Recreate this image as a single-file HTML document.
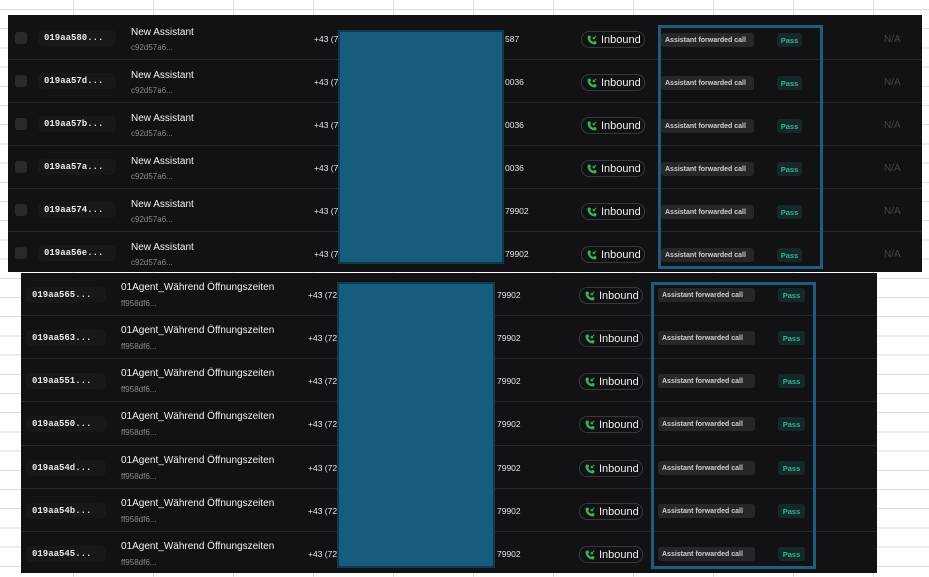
<!DOCTYPE html>
<html><head><meta charset="utf-8"><style>
*{margin:0;padding:0;box-sizing:border-box}
body{width:929px;height:577px;overflow:hidden;position:relative;background:#fff;
background-image:repeating-linear-gradient(90deg,transparent 0 72px,#dcdcdc 72px 73px,transparent 73px 80px),repeating-linear-gradient(180deg,transparent 0 9px,#dcdcdc 9px 10px,transparent 10px 19.2px);
background-position:1px 0,0 0;font-family:"Liberation Sans",sans-serif}
.p{position:absolute;background:#121214}
.r{position:absolute;left:0;right:0;border-bottom:1px solid #2a2a2d}
.r:last-child{border-bottom:none}
.a{position:absolute;white-space:nowrap}
.cb{width:12px;height:12px;border-radius:3px;background:#2a2a2e}
.id{height:16px;border-radius:5px;background:#18181a;color:#e8e8e8;font:bold 9px "Liberation Mono",monospace;line-height:16px;padding-left:6px}
.nm{color:#f2f2f2;font-size:10px}
.sb{color:#8a8a8a;font-size:8px}
.ph{color:#e6e6e6;font-size:8.5px}
.ib{height:17px;width:64px;border:1px solid #38383c;border-radius:8px;color:#f0f0f0;font-size:11px;display:flex;align-items:center;padding-left:19px}
.ib svg{position:absolute;left:5px;top:3px}
.fw{height:14px;width:93px;overflow:hidden;border-radius:3px;background:#27272a;color:#cfcfcf;font-size:7px;font-weight:bold;display:flex;align-items:center;padding:0 4px}
.ps{height:14px;border-radius:3px;background:#15292a;color:#39b38c;font-size:7.5px;font-weight:bold;display:flex;align-items:center;justify-content:center}
.na{color:#444;font-size:10px}
.blue{position:absolute;background:#165c7c;border:2px solid #0d3a52}
.box{position:absolute;border:3px solid #1b5e80}
</style></head><body>
<svg width="0" height="0" style="position:absolute"><defs><symbol id="ph" viewBox="0 0 10 10"><path d="M2 0.5 L3.6 0.8 L4 3 L3 3.8 Q4 6 6.2 7 L7 6 L9.3 6.4 L9.5 8.2 Q9 9.6 7.5 9.5 Q1 8.5 0.5 2.3 Q0.6 0.7 2 0.5Z" fill="#3fae5f"/><path d="M9.2 0.8 L6.2 3.8 M6.2 1.8 V3.8 H8.2" stroke="#3fae5f" stroke-width="1" fill="none"/></symbol></defs></svg>

<div class="p" style="left:8px;top:15px;width:914px;height:257px">
<div class="r" style="top:0;height:45px"><div class="a cb" style="left:7px;top:17px"></div><div class="a id" style="left:30px;top:15px;width:78px">019aa580...</div><div class="a nm" style="left:123px;top:12px">New Assistant</div><div class="a sb" style="left:123px;top:28px">c92d57a6...</div><div class="a ph" style="left:306px;top:19px">+43 (7</div><div class="a ph" style="left:497px;top:19px">587</div><div class="a ib" style="left:573px;top:16px"><svg width="10" height="10"><use href="#ph"/></svg>Inbound</div><div class="a fw" style="left:653px;top:18px">Assistant forwarded call</div><div class="a ps" style="left:769px;top:18px;width:25px">Pass</div><div class="a na" style="left:876px;top:19px">N/A</div></div>
<div class="r" style="top:45px;height:43px"><div class="a cb" style="left:7px;top:15px"></div><div class="a id" style="left:30px;top:13px;width:78px">019aa57d...</div><div class="a nm" style="left:123px;top:10px">New Assistant</div><div class="a sb" style="left:123px;top:26px">c92d57a6...</div><div class="a ph" style="left:306px;top:17px">+43 (7</div><div class="a ph" style="left:497px;top:17px">0036</div><div class="a ib" style="left:573px;top:14px"><svg width="10" height="10"><use href="#ph"/></svg>Inbound</div><div class="a fw" style="left:653px;top:16px">Assistant forwarded call</div><div class="a ps" style="left:769px;top:16px;width:25px">Pass</div><div class="a na" style="left:876px;top:17px">N/A</div></div>
<div class="r" style="top:88px;height:43px"><div class="a cb" style="left:7px;top:15px"></div><div class="a id" style="left:30px;top:13px;width:78px">019aa57b...</div><div class="a nm" style="left:123px;top:10px">New Assistant</div><div class="a sb" style="left:123px;top:26px">c92d57a6...</div><div class="a ph" style="left:306px;top:17px">+43 (7</div><div class="a ph" style="left:497px;top:17px">0036</div><div class="a ib" style="left:573px;top:14px"><svg width="10" height="10"><use href="#ph"/></svg>Inbound</div><div class="a fw" style="left:653px;top:16px">Assistant forwarded call</div><div class="a ps" style="left:769px;top:16px;width:25px">Pass</div><div class="a na" style="left:876px;top:17px">N/A</div></div>
<div class="r" style="top:131px;height:43px"><div class="a cb" style="left:7px;top:15px"></div><div class="a id" style="left:30px;top:13px;width:78px">019aa57a...</div><div class="a nm" style="left:123px;top:10px">New Assistant</div><div class="a sb" style="left:123px;top:26px">c92d57a6...</div><div class="a ph" style="left:306px;top:17px">+43 (7</div><div class="a ph" style="left:497px;top:17px">0036</div><div class="a ib" style="left:573px;top:14px"><svg width="10" height="10"><use href="#ph"/></svg>Inbound</div><div class="a fw" style="left:653px;top:16px">Assistant forwarded call</div><div class="a ps" style="left:769px;top:16px;width:25px">Pass</div><div class="a na" style="left:876px;top:17px">N/A</div></div>
<div class="r" style="top:174px;height:43px"><div class="a cb" style="left:7px;top:15px"></div><div class="a id" style="left:30px;top:13px;width:78px">019aa574...</div><div class="a nm" style="left:123px;top:10px">New Assistant</div><div class="a sb" style="left:123px;top:26px">c92d57a6...</div><div class="a ph" style="left:306px;top:17px">+43 (7</div><div class="a ph" style="left:497px;top:17px">79902</div><div class="a ib" style="left:573px;top:14px"><svg width="10" height="10"><use href="#ph"/></svg>Inbound</div><div class="a fw" style="left:653px;top:16px">Assistant forwarded call</div><div class="a ps" style="left:769px;top:16px;width:25px">Pass</div><div class="a na" style="left:876px;top:17px">N/A</div></div>
<div class="r" style="top:217px;height:40px"><div class="a cb" style="left:7px;top:15px"></div><div class="a id" style="left:30px;top:13px;width:78px">019aa56e...</div><div class="a nm" style="left:123px;top:10px">New Assistant</div><div class="a sb" style="left:123px;top:26px">c92d57a6...</div><div class="a ph" style="left:306px;top:17px">+43 (7</div><div class="a ph" style="left:497px;top:17px">79902</div><div class="a ib" style="left:573px;top:14px"><svg width="10" height="10"><use href="#ph"/></svg>Inbound</div><div class="a fw" style="left:653px;top:16px">Assistant forwarded call</div><div class="a ps" style="left:769px;top:16px;width:25px">Pass</div><div class="a na" style="left:876px;top:17px">N/A</div></div>
</div>
<div class="blue" style="left:338px;top:30px;width:166px;height:234px"></div>
<div class="box" style="left:658px;top:25px;width:165px;height:244px"></div>

<div class="p" style="left:21px;top:273px;width:856px;height:300px">
<div class="r" style="top:0;height:43px"><div class="a id" style="left:5px;top:14px;width:80px">019aa565...</div><div class="a nm" style="left:100px;top:9px">01Agent_Während Öffnungszeiten</div><div class="a sb" style="left:100px;top:26px">ff958df6...</div><div class="a ph" style="left:287px;top:17px">+43 (72</div><div class="a ph" style="left:476px;top:17px">79902</div><div class="a ib" style="left:558px;top:14px"><svg width="10" height="10"><use href="#ph"/></svg>Inbound</div><div class="a fw" style="left:637px;top:15px;width:97px">Assistant forwarded call</div><div class="a ps" style="left:757px;top:15px;width:27px">Pass</div></div>
<div class="r" style="top:43px;height:43px"><div class="a id" style="left:5px;top:14px;width:80px">019aa563...</div><div class="a nm" style="left:100px;top:9px">01Agent_Während Öffnungszeiten</div><div class="a sb" style="left:100px;top:26px">ff958df6...</div><div class="a ph" style="left:287px;top:17px">+43 (72</div><div class="a ph" style="left:476px;top:17px">79902</div><div class="a ib" style="left:558px;top:14px"><svg width="10" height="10"><use href="#ph"/></svg>Inbound</div><div class="a fw" style="left:637px;top:15px;width:97px">Assistant forwarded call</div><div class="a ps" style="left:757px;top:15px;width:27px">Pass</div></div>
<div class="r" style="top:86px;height:43px"><div class="a id" style="left:5px;top:14px;width:80px">019aa551...</div><div class="a nm" style="left:100px;top:9px">01Agent_Während Öffnungszeiten</div><div class="a sb" style="left:100px;top:26px">ff958df6...</div><div class="a ph" style="left:287px;top:17px">+43 (72</div><div class="a ph" style="left:476px;top:17px">79902</div><div class="a ib" style="left:558px;top:14px"><svg width="10" height="10"><use href="#ph"/></svg>Inbound</div><div class="a fw" style="left:637px;top:15px;width:97px">Assistant forwarded call</div><div class="a ps" style="left:757px;top:15px;width:27px">Pass</div></div>
<div class="r" style="top:129px;height:44px"><div class="a id" style="left:5px;top:14px;width:80px">019aa550...</div><div class="a nm" style="left:100px;top:9px">01Agent_Während Öffnungszeiten</div><div class="a sb" style="left:100px;top:26px">ff958df6...</div><div class="a ph" style="left:287px;top:17px">+43 (72</div><div class="a ph" style="left:476px;top:17px">79902</div><div class="a ib" style="left:558px;top:14px"><svg width="10" height="10"><use href="#ph"/></svg>Inbound</div><div class="a fw" style="left:637px;top:15px;width:97px">Assistant forwarded call</div><div class="a ps" style="left:757px;top:15px;width:27px">Pass</div></div>
<div class="r" style="top:173px;height:43px"><div class="a id" style="left:5px;top:14px;width:80px">019aa54d...</div><div class="a nm" style="left:100px;top:9px">01Agent_Während Öffnungszeiten</div><div class="a sb" style="left:100px;top:26px">ff958df6...</div><div class="a ph" style="left:287px;top:17px">+43 (72</div><div class="a ph" style="left:476px;top:17px">79902</div><div class="a ib" style="left:558px;top:14px"><svg width="10" height="10"><use href="#ph"/></svg>Inbound</div><div class="a fw" style="left:637px;top:15px;width:97px">Assistant forwarded call</div><div class="a ps" style="left:757px;top:15px;width:27px">Pass</div></div>
<div class="r" style="top:216px;height:43px"><div class="a id" style="left:5px;top:14px;width:80px">019aa54b...</div><div class="a nm" style="left:100px;top:9px">01Agent_Während Öffnungszeiten</div><div class="a sb" style="left:100px;top:26px">ff958df6...</div><div class="a ph" style="left:287px;top:17px">+43 (72</div><div class="a ph" style="left:476px;top:17px">79902</div><div class="a ib" style="left:558px;top:14px"><svg width="10" height="10"><use href="#ph"/></svg>Inbound</div><div class="a fw" style="left:637px;top:15px;width:97px">Assistant forwarded call</div><div class="a ps" style="left:757px;top:15px;width:27px">Pass</div></div>
<div class="r" style="top:259px;height:41px"><div class="a id" style="left:5px;top:14px;width:80px">019aa545...</div><div class="a nm" style="left:100px;top:9px">01Agent_Während Öffnungszeiten</div><div class="a sb" style="left:100px;top:26px">ff958df6...</div><div class="a ph" style="left:287px;top:17px">+43 (72</div><div class="a ph" style="left:476px;top:17px">79902</div><div class="a ib" style="left:558px;top:14px"><svg width="10" height="10"><use href="#ph"/></svg>Inbound</div><div class="a fw" style="left:637px;top:15px;width:97px">Assistant forwarded call</div><div class="a ps" style="left:757px;top:15px;width:27px">Pass</div></div>
</div>
<div class="blue" style="left:337px;top:282px;width:158px;height:286px"></div>
<div class="box" style="left:651px;top:282px;width:165px;height:287px"></div>
</body></html>
